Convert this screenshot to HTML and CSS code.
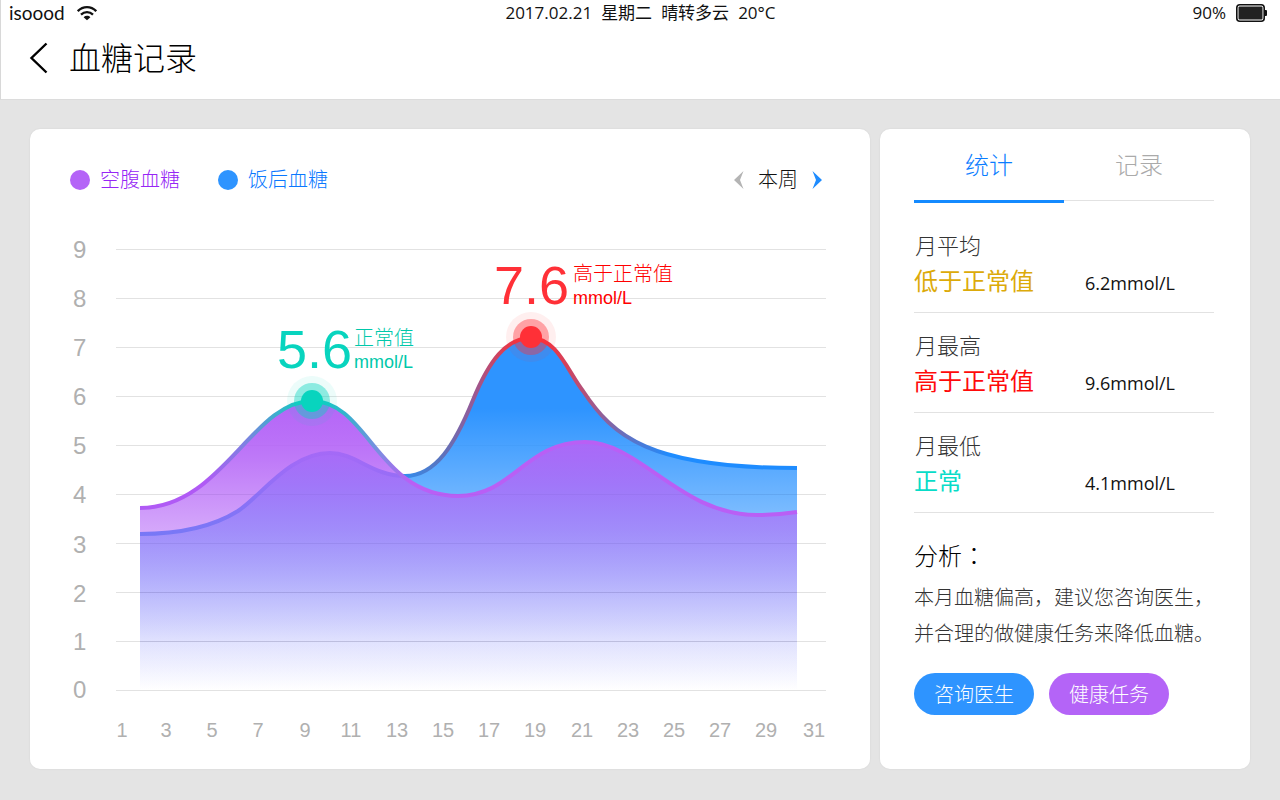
FILE: index.html
```html
<!DOCTYPE html>
<html lang="zh-CN">
<head>
<meta charset="utf-8">
<meta name="viewport" content="width=device-width, initial-scale=1">
<title>血糖记录</title>
<link rel="stylesheet" href="styles.css">
</head>
<body>
<header class="header">
  <div class="status">
    <div class="status-left">
      <span class="brand">isoood</span>
      <svg class="wifi" width="20" height="16" viewBox="0 0 20 16" aria-hidden="true">
        <path d="M.8 6.200C6 .8 14 .8 19.200 6.200M4 9.600c3.500-3.400 8.500-3.400 12 0" fill="none" stroke="#111" stroke-width="2.300"/>
        <path d="M6.600 12.300c2-1.900 4.800-1.900 6.800 0L10 15.200z" fill="#111"/>
      </svg>
    </div>
    <div class="status-mid"><span>2017.02.21</span><span>星期二</span><span>晴转多云</span><span>20°C</span></div>
    <div class="status-right">
      <span>90%</span>
      <svg width="31" height="18" viewBox="0 0 31 18" aria-hidden="true">
        <rect x=".8" y=".8" width="27.400" height="16.400" rx="3" fill="#fff" stroke="#111" stroke-width="1.600"/>
        <rect x="2.500" y="2.500" width="24" height="13" rx="1" fill="#222"/>
        <path d="M29 6h1q1 0 1 1v4q0 1-1 1h-1z" fill="#111"/>
      </svg>
    </div>
  </div>
  <div class="titlebar">
    <button class="back" type="button" aria-label="返回">
      <svg width="20" height="32" viewBox="0 0 20 32" aria-hidden="true"><path d="M17.500 1.500 2.500 16l15 14.500" fill="none" stroke="#000" stroke-width="2.400"/></svg>
    </button>
    <h1>血糖记录</h1>
  </div>
</header>

<main class="content">
  <section class="card chart-card">
    <div class="chart-head">
      <ul class="legend">
        <li class="fasting"><i class="dot"></i>空腹血糖</li>
        <li class="meal"><i class="dot"></i>饭后血糖</li>
      </ul>
      <div class="pager">
        <button type="button" aria-label="上一周"><svg width="10" height="18" viewBox="0 0 10 18" aria-hidden="true"><path d="M9.500 0 0 9l9.500 9L6 9z" fill="#b4b4b4"/></svg></button>
        <span>本周</span>
        <button type="button" aria-label="下一周"><svg width="10" height="18" viewBox="0 0 10 18" aria-hidden="true"><path d="M.5 0 10 9 .5 18 4 9z" fill="#1e8cff"/></svg></button>
      </div>
    </div>
    <svg class="chart" viewBox="70 230 760 520" role="img" aria-label="血糖曲线">
      <defs>
        <linearGradient id="mealFill" gradientUnits="userSpaceOnUse" x1="0" y1="338" x2="0" y2="690">
          <stop offset="0" stop-color="#2e94ff"/><stop offset=".2" stop-color="#2e94ff"/>
          <stop offset=".46" stop-color="#2e94ff" stop-opacity=".68"/><stop offset=".545" stop-color="#2e94ff" stop-opacity=".57"/>
          <stop offset=".744" stop-color="#2e94ff" stop-opacity=".28"/><stop offset=".86" stop-color="#2e94ff" stop-opacity=".12"/>
          <stop offset="1" stop-color="#2e94ff" stop-opacity="0"/>
        </linearGradient>
        <linearGradient id="fastFill" gradientUnits="userSpaceOnUse" x1="0" y1="401" x2="0" y2="690">
          <stop offset="0" stop-color="#b464f7"/><stop offset=".135" stop-color="#b464f7" stop-opacity=".92"/>
          <stop offset=".2" stop-color="#b464f7" stop-opacity=".86"/><stop offset=".446" stop-color="#b464f7" stop-opacity=".57"/>
          <stop offset=".689" stop-color="#b464f7" stop-opacity=".27"/><stop offset=".83" stop-color="#b464f7" stop-opacity=".12"/>
          <stop offset="1" stop-color="#b464f7" stop-opacity="0"/>
        </linearGradient>
        <linearGradient id="mealLine" gradientUnits="userSpaceOnUse" x1="400" y1="0" x2="670" y2="0">
          <stop offset="0" stop-color="#2e90f5"/><stop offset=".15" stop-color="#5a74be"/><stop offset=".27" stop-color="#965a96"/>
          <stop offset=".39" stop-color="#e03c50"/><stop offset=".5" stop-color="#ff2d37"/><stop offset=".59" stop-color="#e03c50"/>
          <stop offset=".72" stop-color="#a05a8c"/><stop offset=".88" stop-color="#5078d2"/><stop offset="1" stop-color="#1e8cff"/>
        </linearGradient>
        <linearGradient id="fastLine" gradientUnits="userSpaceOnUse" x1="205" y1="0" x2="410" y2="0">
          <stop offset="0" stop-color="#b05af5"/><stop offset=".2" stop-color="#7d82e1"/><stop offset=".35" stop-color="#3cafcd"/>
          <stop offset=".5" stop-color="#0ad2be"/><stop offset=".68" stop-color="#32b4cd"/><stop offset=".85" stop-color="#7d8ce1"/>
          <stop offset="1" stop-color="#b95ff5"/>
        </linearGradient>
      </defs>
      <path class="grid" d="M116 249.500H826M116 298.500H826M116 347.500H826M116 396.500H826M116 445.500H826M116 494.500H826M116 543.500H826M116 592.500H826M116 641.500H826M116 690.500H826"/>
      <path fill="url(#mealFill)" d="M140 534C180 534 214 526 238 511C262 495 290 453 330 453C356 453 372 476 405 476C436 476 455 444 473 400C489 361 506 338 531 338C557 338 568 372 583 391C613 436 648 468 797 468V690H140Z"/>
      <path class="line" stroke="url(#mealLine)" d="M140 534C180 534 214 526 238 511C262 495 290 453 330 453C356 453 372 476 405 476C436 476 455 444 473 400C489 361 506 338 531 338C557 338 568 372 583 391C613 436 648 468 797 468"/>
      <path fill="url(#fastFill)" d="M140 508C222 508 252 401 312 401C368 401 378 496 458 496C513 496 525 442 585 442C640 442 680 515 757 515C772 515 784 514 797 512V690H140Z"/>
      <path class="line" stroke="url(#fastLine)" d="M140 508C222 508 252 401 312 401C368 401 378 496 458 496C513 496 525 442 585 442C640 442 680 515 757 515C772 515 784 514 797 512"/>
      <path class="grid-over faint" d="M190 494.500H797M140 543.500H797"/>
      <path class="grid-over" d="M140 592.500H797M140 641.500H797"/>
      <g class="normal">
        <circle cx="312" cy="401" r="25" opacity=".08"/><circle cx="312" cy="401" r="18" opacity=".42"/><circle cx="312" cy="401" r="11"/>
        <text class="big" x="277" y="368">5.6</text>
        <text class="note" x="354" y="345">正常值</text>
        <text class="unit" x="354" y="368">mmol/L</text>
      </g>
      <g class="high">
        <circle cx="531" cy="337" r="25" opacity=".08"/><circle cx="531" cy="337" r="18" opacity=".4"/><circle cx="531" cy="337" r="11"/>
        <text class="big" x="494" y="304">7.6</text>
        <text class="note" x="573" y="281">高于正常值</text>
        <text class="unit" x="573" y="304">mmol/L</text>
      </g>
      <g class="y-axis">
        <text x="73" y="258">9</text><text x="73" y="307">8</text><text x="73" y="356">7</text><text x="73" y="405">6</text><text x="73" y="454">5</text><text x="73" y="503">4</text><text x="73" y="553">3</text><text x="73" y="602">2</text><text x="73" y="650">1</text><text x="73" y="698">0</text>
      </g>
      <g class="x-axis">
        <text x="122" y="737">1</text><text x="166" y="737">3</text><text x="212" y="737">5</text><text x="258" y="737">7</text><text x="305" y="737">9</text><text x="351" y="737">11</text><text x="397" y="737">13</text><text x="443" y="737">15</text><text x="489" y="737">17</text><text x="535" y="737">19</text><text x="582" y="737">21</text><text x="628" y="737">23</text><text x="674" y="737">25</text><text x="720" y="737">27</text><text x="766" y="737">29</text><text x="814" y="737">31</text>
      </g>
    </svg>
  </section>

  <section class="card stats-card">
    <div class="tabs" role="tablist">
      <button class="tab active" type="button" role="tab" aria-selected="true">统计</button>
      <button class="tab" type="button" role="tab" aria-selected="false">记录</button>
    </div>
    <div class="stat"><h2>月平均</h2><p class="low">低于正常值</p><span>6.2mmol/L</span></div>
    <div class="stat"><h2>月最高</h2><p class="over">高于正常值</p><span>9.6mmol/L</span></div>
    <div class="stat"><h2>月最低</h2><p class="ok">正常</p><span>4.1mmol/L</span></div>
    <h3>分析<span class="colon" lang="zh-TW">：</span></h3>
    <p class="advice">本月血糖偏高，建议您咨询医生，并合理的做健康任务来降低血糖。</p>
    <div class="actions">
      <button class="pill blue" type="button">咨询医生</button>
      <button class="pill purple" type="button">健康任务</button>
    </div>
  </section>
</main>
</body>
</html>
```
FILE: styles.css
```css
* { box-sizing: border-box; }
body {
  margin: 0;
  min-height: 100vh;
  display: flex;
  flex-direction: column;
  background: #e4e4e4;
  color: #111;
  font-family: "Open Sans", "Noto Sans CJK SC", sans-serif;
  font-weight: 300;
}
h1, h2, h3, p, ul { margin: 0; padding: 0; font-weight: inherit; }
button { margin: 0; padding: 0; border: 0; background: none; color: inherit; font: inherit; cursor: pointer; }
svg { display: block; }

.header {
  background: #fff;
  border-left: 1px solid #d8d8d8;
  border-bottom: 1px solid #dcdcdc;
}
.status {
  display: grid;
  grid-template-columns: 1fr auto 1fr;
  align-items: center;
  height: 26px;
  padding: 0 8px;
  font-size: 17px;
  line-height: 26px;
  font-weight: 400;
}
.status-left, .status-right { display: flex; align-items: center; gap: 10px; }
.status-left { gap: 12px; }
.status-right { justify-content: flex-end; padding-right: 5px; }
.status-mid { display: flex; align-items: center; gap: 9px; }
.brand { font-family: Lato, sans-serif; font-size: 19px; }
.titlebar { display: flex; align-items: center; gap: 20px; height: 73px; padding: 0 28px 9px; }
.titlebar h1 { font-size: 32px; line-height: 40px; color: #000; }

.content {
  flex: 1;
  display: grid;
  grid-template-columns: minmax(0, 84fr) minmax(0, 37fr);
  align-items: stretch;
  gap: 10px;
  padding: 29px 30px 31px;
}
.card { background: #fff; border-radius: 10px; box-shadow: 0 0 2px rgba(0, 0, 0, .08); }
.chart-card { padding: 36px 40px 19px; }
.chart-head { display: flex; justify-content: space-between; align-items: center; height: 30px; margin-bottom: 35px; padding-right: 8px; font-size: 20px; line-height: 30px; }
.legend { display: flex; gap: 38px; list-style: none; }
.legend li { display: flex; align-items: center; gap: 10px; }
.dot { width: 20px; height: 20px; border-radius: 50%; }
.fasting { color: #9626f5; }
.fasting .dot { background: #b464f7; }
.meal { color: #0a78ff; }
.meal .dot { background: #2e94ff; }
.pager { display: flex; align-items: center; gap: 14px; }

.chart { width: 100%; height: auto; }
.grid { stroke: #e2e2e2; fill: none; }
.grid-over { stroke: #505096; stroke-opacity: .1; fill: none; }
.grid-over.faint { stroke-opacity: .05; }
.line { fill: none; stroke-width: 4; }
.normal { fill: #08d4be; }
.high { fill: #ff3037; }
.big { font: 400 54px "Liberation Sans", Arial, sans-serif; }
.note { font-size: 20px; }
.unit { font: 400 18px "Liberation Sans", Arial, sans-serif; }
.normal .note, .normal .unit { fill: #00c8aa; }
.high .note, .high .unit { fill: #ff0000; }
.y-axis, .x-axis { fill: #b0b0b0; font-family: "Liberation Sans", Arial, sans-serif; font-weight: 400; }
.y-axis { font-size: 24px; }
.x-axis { font-size: 20px; text-anchor: middle; }

.stats-card { padding: 0 36px 24px 34px; }
.tabs { display: grid; grid-template-columns: 1fr 1fr; height: 74px; margin-bottom: 24px; }
.tab { display: flex; align-items: center; justify-content: center; height: 72px; padding-bottom: 2px; border-bottom: 1px solid #e2e2e2; font-size: 24px; color: #aaa; }
.tab.active { height: 74px; border-bottom: 3px solid #148aff; color: #0a7dff; }
.stat {
  display: grid;
  grid-template-columns: 171px 1fr;
  grid-template-rows: 36px 36px;
  align-items: center;
  height: 86px;
  margin-bottom: 14px;
  border-bottom: 1px solid #e2e2e2;
}
.stat h2 { grid-column: 1 / -1; padding-left: 1px; font-size: 22px; line-height: 36px; color: #333; }
.stat p { font-size: 24px; line-height: 36px; font-weight: 400; }
.stat span { padding-top: 4px; font-size: 18px; line-height: 36px; font-weight: 400; }
.low { color: #dcaa0a; }
.over { color: #ff0a0a; }
.ok { color: #08dcc8; }
.stats-card h3 { margin-top: 24px; font-size: 24px; line-height: 36px; color: #000; }
.colon { font-family: "Noto Sans CJK TC", sans-serif; }
.advice { margin-top: 6px; font-size: 20px; line-height: 36px; color: #333; }
.actions { display: flex; gap: 15px; margin-top: 21px; }
.pill { width: 120px; height: 42px; padding-bottom: 2px; border-radius: 21px; font-size: 20px; color: #fff; }
.blue { background: #2e94ff; }
.purple { background: #b464f7; }
```
